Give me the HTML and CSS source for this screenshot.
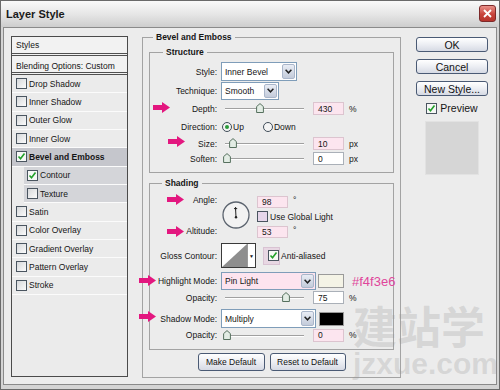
FILE: index.html
```html
<!DOCTYPE html>
<html lang="en">
<head>
    <meta charset="UTF-8">
    <meta name="viewport" content="width=device-width, initial-scale=1.0">
    <title>Layer Style</title>
    <link rel="stylesheet" href="styles.css">
</head>
<body>

<div class="window">
    <div class="titlebar">
        <span class="title">Layer Style</span>
        <span class="close-btn">
            <svg width="9" height="9" viewBox="0 0 9 9"><path d="M1 1l7 7M8 1L1 8" stroke="#fff" stroke-width="1.8"/></svg>
        </span>
    </div>

    <div class="dialog">
        <!-- effects list -->
        <div class="style-list">
            <div class="list-head">Styles</div>
            <div class="list-blend">Blending Options: Custom</div>
            <div class="list-item"><span class="check"></span>Drop Shadow</div>
            <div class="list-item"><span class="check"></span>Inner Shadow</div>
            <div class="list-item"><span class="check"></span>Outer Glow</div>
            <div class="list-item"><span class="check"></span>Inner Glow</div>
            <div class="list-item active">
                <span class="check on"><svg width="9" height="9" viewBox="0 0 9 9"><path d="M1.5 4.5l2 2.2 4-5.2" fill="none" stroke="#22a02a" stroke-width="1.6"/></svg></span>Bevel and Emboss
            </div>
            <div class="list-item sub">
                <span class="check on"><svg width="9" height="9" viewBox="0 0 9 9"><path d="M1.5 4.5l2 2.2 4-5.2" fill="none" stroke="#22a02a" stroke-width="1.6"/></svg></span>Contour
            </div>
            <div class="list-item sub"><span class="check"></span>Texture</div>
            <div class="list-item"><span class="check"></span>Satin</div>
            <div class="list-item"><span class="check"></span>Color Overlay</div>
            <div class="list-item"><span class="check"></span>Gradient Overlay</div>
            <div class="list-item"><span class="check"></span>Pattern Overlay</div>
            <div class="list-item"><span class="check"></span>Stroke</div>
        </div>

        <!-- bevel and emboss settings -->
        <div class="group outer">
            <div class="legend">Bevel and Emboss</div>

            <div class="group structure">
                <div class="legend">Structure</div>

                <div class="row r-style">
                    <span class="lbl">Style:</span>
                    <div class="ctl">
                        <div class="select w-style">
                            <span class="sel-text">Inner Bevel</span>
                            <span class="sel-btn"><svg width="7" height="5" viewBox="0 0 7 5"><path d="M.6 .8l2.9 3 2.9-3" fill="none" stroke="#222" stroke-width="1.5"/></svg></span>
                        </div>
                    </div>
                </div>

                <div class="row r-tech">
                    <span class="lbl">Technique:</span>
                    <div class="ctl">
                        <div class="select w-tech">
                            <span class="sel-text">Smooth</span>
                            <span class="sel-btn"><svg width="7" height="5" viewBox="0 0 7 5"><path d="M.6 .8l2.9 3 2.9-3" fill="none" stroke="#222" stroke-width="1.5"/></svg></span>
                        </div>
                    </div>
                </div>

                <div class="row r-depth">
                    <svg class="arrow a-depth" viewBox="0 0 17 11"><path d="M0 3h9V0l8 5.5-8 5.5V8H0z" fill="#e3177f"/></svg>
                    <span class="lbl">Depth:</span>
                    <div class="ctl">
                        <div class="slider"><span class="track"></span><span class="thumb" style="left:44%"><svg width="8" height="10" viewBox="0 0 8 10"><path d="M4 .6l3.4 3v5.9H.6V3.6z" fill="#e2ece4" stroke="#56705e"/></svg></span></div>
                        <span class="num pink">430</span><span class="unit">%</span>
                    </div>
                </div>

                <div class="row r-dir">
                    <span class="lbl">Direction:</span>
                    <div class="ctl">
                        <span class="radio-opt"><span class="radio on"></span>Up</span>
                        <span class="radio-opt down"><span class="radio"></span>Down</span>
                    </div>
                </div>

                <div class="row r-size">
                    <svg class="arrow a-size" viewBox="0 0 17 11"><path d="M0 3h9V0l8 5.5-8 5.5V8H0z" fill="#e3177f"/></svg>
                    <span class="lbl">Size:</span>
                    <div class="ctl">
                        <div class="slider"><span class="track"></span><span class="thumb" style="left:10%"><svg width="8" height="10" viewBox="0 0 8 10"><path d="M4 .6l3.4 3v5.9H.6V3.6z" fill="#e2ece4" stroke="#56705e"/></svg></span></div>
                        <span class="num pink">10</span><span class="unit">px</span>
                    </div>
                </div>

                <div class="row r-soften">
                    <span class="lbl">Soften:</span>
                    <div class="ctl">
                        <div class="slider"><span class="track"></span><span class="thumb" style="left:2%"><svg width="8" height="10" viewBox="0 0 8 10"><path d="M4 .6l3.4 3v5.9H.6V3.6z" fill="#e2ece4" stroke="#56705e"/></svg></span></div>
                        <span class="num">0</span><span class="unit">px</span>
                    </div>
                </div>
            </div>

            <div class="group shading">
                <div class="legend">Shading</div>

                <div class="row r-angle">
                    <svg class="arrow a-angle" viewBox="0 0 17 11"><path d="M0 3h9V0l8 5.5-8 5.5V8H0z" fill="#e3177f"/></svg>
                    <svg class="arrow a-alt" viewBox="0 0 17 11"><path d="M0 3h9V0l8 5.5-8 5.5V8H0z" fill="#e3177f"/></svg>
                    <div class="lbl lbl-stack"><span>Angle:</span><span>Altitude:</span></div>
                    <div class="ctl ctl-angle">
                        <svg class="dial" width="28" height="28" viewBox="0 0 28 28">
                            <circle cx="14" cy="14" r="13" fill="#f2f2f2" stroke="#5b636e" stroke-width="1.3"/>
                            <path d="M14 16.2L13.6 8.5M12 7.6h3.2M13.6 6v3.2" stroke="#222" stroke-width="1"/>
                            <circle cx="14" cy="16.3" r="1.2" fill="#222"/>
                        </svg>
                        <div class="angle-stack">
                            <div class="mini"><span class="num pink">98</span><span class="deg">°</span></div>
                            <div class="mini"><span class="check lilac"></span>Use Global Light</div>
                            <div class="mini"><span class="num pink">53</span><span class="deg">°</span></div>
                        </div>
                    </div>
                </div>

                <div class="row r-gloss">
                    <span class="lbl">Gloss Contour:</span>
                    <div class="ctl">
                        <div class="contour">
                            <svg width="25" height="23" viewBox="0 0 25 23"><path d="M25 0V23H0z" fill="#8e8e8e"/></svg>
                            <span class="contour-drop">▼</span>
                        </div>
                        <span class="aa"><span class="check on"><svg width="9" height="9" viewBox="0 0 9 9"><path d="M1.5 4.5l2 2.2 4-5.2" fill="none" stroke="#22a02a" stroke-width="1.6"/></svg></span></span>
                        <span class="aa-text">Anti-aliased</span>
                    </div>
                </div>

                <div class="row r-mode">
                    <svg class="arrow a-mode" viewBox="0 0 17 11"><path d="M0 3h9V0l8 5.5-8 5.5V8H0z" fill="#e3177f"/></svg>
                    <span class="lbl">Highlight Mode:</span>
                    <div class="ctl">
                        <div class="select w-mode pink">
                            <span class="sel-text">Pin Light</span>
                            <span class="sel-btn"><svg width="7" height="5" viewBox="0 0 7 5"><path d="M.6 .8l2.9 3 2.9-3" fill="none" stroke="#222" stroke-width="1.5"/></svg></span>
                        </div>
                        <span class="swatch cream"></span>
                        <span class="hex">#f4f3e6</span>
                    </div>
                </div>

                <div class="row r-op">
                    <span class="lbl">Opacity:</span>
                    <div class="ctl">
                        <div class="slider"><span class="track"></span><span class="thumb" style="left:77%"><svg width="8" height="10" viewBox="0 0 8 10"><path d="M4 .6l3.4 3v5.9H.6V3.6z" fill="#e2ece4" stroke="#56705e"/></svg></span></div>
                        <span class="num">75</span><span class="unit">%</span>
                    </div>
                </div>

                <div class="row r-smode">
                    <svg class="arrow a-smode" viewBox="0 0 17 11"><path d="M0 3h9V0l8 5.5-8 5.5V8H0z" fill="#e3177f"/></svg>
                    <span class="lbl">Shadow Mode:</span>
                    <div class="ctl">
                        <div class="select w-mode">
                            <span class="sel-text">Multiply</span>
                            <span class="sel-btn"><svg width="7" height="5" viewBox="0 0 7 5"><path d="M.6 .8l2.9 3 2.9-3" fill="none" stroke="#222" stroke-width="1.5"/></svg></span>
                        </div>
                        <span class="swatch black"></span>
                    </div>
                </div>

                <div class="row r-op2">
                    <span class="lbl">Opacity:</span>
                    <div class="ctl">
                        <div class="slider"><span class="track"></span><span class="thumb" style="left:2%"><svg width="8" height="10" viewBox="0 0 8 10"><path d="M4 .6l3.4 3v5.9H.6V3.6z" fill="#e2ece4" stroke="#56705e"/></svg></span></div>
                        <span class="num pink">0</span><span class="unit">%</span>
                    </div>
                </div>
            </div>

            <div class="bottom-buttons">
                <button class="btn btn-make">Make Default</button>
                <button class="btn btn-reset">Reset to Default</button>
            </div>
        </div>

        <!-- dialog buttons -->
        <div class="side">
            <button class="btn">OK</button>
            <button class="btn">Cancel</button>
            <button class="btn">New Style...</button>
            <div class="preview-row">
                <span class="check on"><svg width="9" height="9" viewBox="0 0 9 9"><path d="M1.5 4.5l2 2.2 4-5.2" fill="none" stroke="#22a02a" stroke-width="1.6"/></svg></span>Preview
            </div>
            <div class="preview-box"></div>
        </div>
    </div>

    <div class="watermark">
        <div class="wm-cn">建站学</div>
        <div class="wm-en">jzxue.com</div>
    </div>
</div>

</body>
</html>
```

FILE: styles.css
```css
* {
    margin: 0;
    padding: 0;
    box-sizing: border-box;
}
body {
    font-family: "Liberation Sans", Arial, sans-serif;
    font-size: 8.5px;
    color: #151515;
    background: #fff;
}
.window {
    position: relative;
    width: 500px;
    height: 390px;
    border: 1px solid #6a6a6a;
    background: #d4d4d4;
    padding: 0 2px 4px;
    display: flex;
    flex-direction: column;
    overflow: hidden;
}
.titlebar {
    height: 26px;
    flex: none;
    margin: 0 -2px;
    padding: 0 3px 0 5px;
    display: flex;
    align-items: center;
    justify-content: space-between;
    background: linear-gradient(#fafafa, #e4e4e4 55%, #cdcdcd);
}
.title {
    font-size: 11px;
    font-weight: bold;
    color: #1a1a1a;
}
.close-btn {
    width: 17px;
    height: 17px;
    margin-top: -1px;
    border: 1px solid #7d2a2a;
    border-radius: 3px;
    background: linear-gradient(#e9918a, #c8443c 55%, #b6332c);
    display: flex;
    align-items: center;
    justify-content: center;
}
.dialog {
    flex: 1;
    border: 1px solid #8a8a8a;
    background: #ececec;
    display: flex;
    align-items: flex-start;
    padding: 8px 7px 0;
}

/* left list */
.style-list {
    width: 117px;
    height: 341px;
    flex: none;
    border: 1px solid #4b4b4b;
    background: #ebebeb;
}
.list-head, .list-blend {
    height: 19px;
    display: flex;
    align-items: center;
    padding-left: 4px;
    background: #f2f2f2;
    border-bottom: 3px double #505050;
}
.list-blend {
    padding-top: 3px;
}
.list-item {
    height: 18.33px;
    display: flex;
    align-items: center;
    gap: 2px;
    padding-left: 4px;
    border-bottom: 1px solid #fbfbfb;
}
.list-item.active {
    background: #c5c6cc;
    font-weight: bold;
}
.list-item.sub {
    margin-left: 12px;
    padding-left: 3px;
    background: #d4d5d9;
}
.check {
    width: 11px;
    height: 11px;
    flex: none;
    border: 1px solid #4a5560;
    background: linear-gradient(135deg, #d6d8da, #fbfbfb);
    display: inline-flex;
    align-items: center;
    justify-content: center;
}
.check.on {
    background: #f6f8f6;
}
.check.lilac {
    background: #e6d6ea;
    margin-right: 2px;
}

/* groups */
.group {
    border: 1px solid #a3a3a3;
}
.legend {
    display: block;
    width: fit-content;
    height: 13px;
    line-height: 13px;
    margin: -7px 0 -6px 4px;
    padding: 0 3px;
    background: #ececec;
    font-weight: bold;
}
.outer {
    width: 259px;
    height: 341px;
    flex: none;
    margin: 1px 0 0 14px;
    padding: 0 6px;
}
.structure {
    height: 121px;
    margin-top: 14px;
}
.structure .legend {
    margin: -7px 0 3px 13px;
}
.shading {
    height: 167px;
    margin-top: 10px;
}
.shading .legend {
    margin: -7px 0 3px 12px;
}

/* rows */
.row {
    position: relative;
    display: grid;
    grid-template-columns: 67px 1fr;
    column-gap: 4px;
    align-items: center;
}
.lbl {
    text-align: right;
    white-space: nowrap;
}
.ctl {
    display: flex;
    align-items: center;
    height: 100%;
    white-space: nowrap;
}
.r-style { height: 19px; }
.r-tech { height: 19px; }
.r-depth { height: 17px; }
.r-dir { height: 19px; }
.r-size { height: 15px; }
.r-soften { height: 15px; }
.r-angle { height: 47px; align-items: stretch; }
.r-gloss { height: 25px; margin-top: 3px; }
.r-mode { height: 18px; margin-top: 4px; }
.r-op { height: 15px; }
.r-smode { height: 19px; margin-top: 4px; }
.r-op2 { height: 14px; }

.arrow {
    position: absolute;
    width: 17px;
    height: 11px;
}
.a-depth { left: 3px; top: 2px; }
.a-size { left: 18px; top: 0; }
.a-angle { left: 17px; top: 1px; }
.a-alt { left: 17px; top: 33px; }
.a-mode { left: -11px; top: 3px; }
.a-smode { left: -11px; top: 2px; }

/* selects */
.select {
    display: flex;
    height: 100%;
    border: 1px solid #7f9db9;
    background: #fff;
    padding: 1px;
}
.sel-text {
    flex: 1;
    display: flex;
    align-items: center;
    padding-left: 2px;
}
.sel-btn {
    width: 13px;
    border: 1px solid #aab6ca;
    border-radius: 2px;
    background: linear-gradient(#e9edf5, #c3cbda);
    display: flex;
    align-items: center;
    justify-content: center;
}
.w-style { width: 76px; }
.w-tech { width: 58px; height: 18px; }
.w-mode { width: 95px; }
.select.pink {
    background: #fde4ef;
}

/* sliders and number fields */
.slider {
    position: relative;
    width: 79px;
    height: 11px;
    margin-left: 4px;
    flex: none;
}
.track {
    position: absolute;
    left: 0;
    right: 0;
    top: 5px;
    height: 2px;
    border-top: 1px solid #a0a0a0;
    border-bottom: 1px solid #fff;
}
.thumb {
    position: absolute;
    top: 0;
    margin-left: -4px;
    width: 8px;
    height: 10px;
    display: flex;
}
.num {
    width: 31px;
    height: 13px;
    flex: none;
    margin-left: 9px;
    border: 1px solid #aab0b8;
    background: #fff;
    padding-left: 4px;
    display: flex;
    align-items: center;
}
.num.pink {
    background: #fce5ef;
    border-color: #dcc4cf;
}
.unit {
    margin-left: 5px;
}

/* direction */
.radio-opt {
    display: flex;
    align-items: center;
    gap: 1px;
    margin-left: 1px;
}
.radio-opt.down {
    margin-left: 19px;
}
.radio {
    width: 10px;
    height: 10px;
    border-radius: 50%;
    border: 1px solid #3f4c58;
    background: #f4f4f4;
    display: inline-flex;
    align-items: center;
    justify-content: center;
}
.radio.on::after {
    content: "";
    width: 4px;
    height: 4px;
    border-radius: 50%;
    background: #2a9a3a;
}

/* angle block */
.lbl-stack {
    display: flex;
    flex-direction: column;
    justify-content: space-between;
    padding: 1px 0 2px;
    line-height: 13px;
}
.ctl-angle {
    align-items: flex-start;
}
.dial {
    flex: none;
    margin: 8px 0 0 1px;
}
.angle-stack {
    margin-left: 7px;
    padding-top: 2px;
    display: flex;
    flex-direction: column;
    gap: 2px;
}
.mini {
    height: 13px;
    display: flex;
    align-items: center;
}
.mini .num {
    margin-left: 0;
    height: 12px;
}
.deg {
    margin-left: 5px;
    align-self: flex-start;
}

/* gloss contour */
.contour {
    display: flex;
    width: 35px;
    height: 25px;
    border: 1px solid #3a3a3a;
    background: #fff;
}
.contour svg {
    flex: none;
}
.contour-drop {
    flex: 1;
    border-left: 1px solid #9a9a9a;
    display: flex;
    align-items: center;
    justify-content: center;
    font-size: 5px;
}
.aa {
    width: 17px;
    height: 18px;
    margin-left: 7px;
    padding-left: 4px;
    background: #e8d7e3;
    border: 1px solid #d9c3d3;
    display: flex;
    align-items: center;
}
.aa-text {
    margin-left: 1px;
}

/* colour swatches */
.swatch {
    width: 26px;
    height: 14px;
    flex: none;
    margin-left: 2px;
    border: 1px solid #9a9a9a;
}
.swatch.cream {
    background: #f4f3e6;
}
.swatch.black {
    background: #000;
    width: 25px;
    margin-left: 3px;
}
.hex {
    margin-left: 8px;
    font-size: 13px;
    color: #e0469b;
}

/* buttons */
.btn {
    height: 18px;
    padding: 0;
    border: 1px solid #4a5a74;
    border-radius: 3px;
    background: linear-gradient(#ffffff, #eceef3 50%, #d6dae4);
    font-family: inherit;
    font-size: inherit;
    color: #111;
    display: flex;
    align-items: center;
    justify-content: center;
}
.bottom-buttons {
    display: flex;
    justify-content: center;
    gap: 5px;
    margin-top: 3px;
}
.btn-make { width: 67px; }
.btn-reset { width: 76px; }

.side {
    width: 72px;
    flex: none;
    margin: 1px 0 0 15px;
    display: flex;
    flex-direction: column;
    align-items: center;
}
.side .btn {
    width: 72px;
    height: 15px;
    font-size: 10.5px;
}
.side .btn + .btn {
    margin-top: 7px;
}
.preview-row {
    margin-top: 6px;
    display: flex;
    align-items: center;
    gap: 3px;
    font-size: 10.5px;
}
.preview-box {
    width: 54px;
    height: 54px;
    margin-top: 7px;
    background: #d6d6d6;
    border: 1px solid #e2e2e2;
}

/* watermark over the screenshot */
.watermark {
    position: absolute;
    left: 352px;
    top: 302px;
    color: rgba(150, 150, 150, 0.26);
    line-height: 1;
    pointer-events: none;
}
.wm-cn {
    font-family: "Noto Sans CJK SC", sans-serif;
    font-weight: bold;
    font-size: 44px;
}
.wm-en {
    font-weight: bold;
    font-size: 30px;
    margin-top: 2px;
}
```
